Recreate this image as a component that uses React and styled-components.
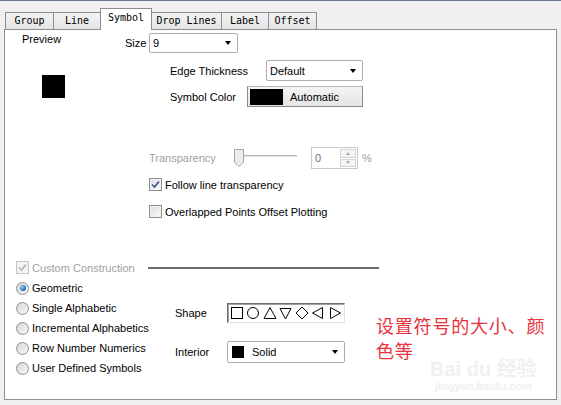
import React from "react";
import styled, { createGlobalStyle } from "styled-components";

const GlobalStyle = createGlobalStyle`
  html, body {
    margin: 0;
    padding: 0;
    background: #f0f0f0;
  }
  body {
    font-family: "Liberation Sans", Arial, sans-serif;
    font-size: 11px;
    color: #000;
  }
`;

const Window = styled.div`
  position: relative;
  width: 561px;
  height: 405px;
  box-sizing: border-box;
  border-top: 1px solid #6b7a8c;
  background: #f0f0f0;
  overflow: hidden;
`;

const TabBar = styled.div`
  position: relative;
  z-index: 1;
  display: flex;
  align-items: flex-end;
  height: 21px;
  margin-top: 7px;
  padding-left: 5px;
`;

const Tab = styled.div`
  position: relative;
  z-index: ${p => (p.$active ? 2 : 1)};
  box-sizing: border-box;
  width: ${p => p.$w}px;
  height: ${p => (p.$active ? 22 : 17)}px;
  margin-left: -1px;
  margin-bottom: ${p => (p.$active ? -1 : 0)}px;
  border: 1px solid #898c95;
  border-bottom: none;
  background: ${p => (p.$active ? "#fff" : "linear-gradient(#f3f3f3, #e4e4e4)")};
  font-family: "DejaVu Sans Mono", "Liberation Mono", monospace;
  font-size: 10px;
  line-height: ${p => (p.$active ? 18 : 16)}px;
  text-align: center;
  &:first-child {
    margin-left: 0;
  }
`;

const Panel = styled.div`
  position: relative;
  z-index: 0;
  box-sizing: border-box;
  height: 371px;
  margin: 0 4px;
  border: 1px solid #8e8f8f;
  background: #fff;
  display: flex;
  flex-direction: column;
`;

const TopSection = styled.div`
  display: flex;
`;

const PreviewCol = styled.div`
  width: 120px;
  flex-shrink: 0;
  display: flex;
  flex-direction: column;
`;

const PreviewLabel = styled.div`
  margin: 2px 0 0 17px;
  line-height: 14px;
`;

const PreviewSymbol = styled.div`
  width: 23px;
  height: 23px;
  margin: 29px 0 0 37px;
  background: #000;
`;

const Options = styled.div`
  display: flex;
  flex-direction: column;
`;

const Row = styled.div`
  display: flex;
  align-items: center;
  height: ${p => p.$h}px;
  margin-top: ${p => p.$mt || 0}px;
  padding-left: ${p => p.$pl || 0}px;
  gap: ${p => p.$gap || 0}px;
`;

const Label = styled.div`
  width: ${p => (p.$w ? `${p.$w}px` : "auto")};
  flex-shrink: 0;
  color: ${p => (p.$disabled ? "#a0a0a0" : "#000")};
  white-space: nowrap;
`;

const Combo = styled.div`
  box-sizing: border-box;
  width: ${p => p.$w}px;
  height: ${p => p.$h}px;
  display: flex;
  align-items: center;
  padding: 0 6px 0 ${p => p.$pl || 3}px;
  border: 1px solid #abadb3;
  border-radius: 2px;
  background: #fff;
`;

const ComboText = styled.span`
  flex: 1;
  margin-left: ${p => p.$ml || 0}px;
`;

const Arrow = styled.span`
  width: 0;
  height: 0;
  border-left: 3.5px solid transparent;
  border-right: 3.5px solid transparent;
  border-top: 4px solid #000;
`;

const ColorButton = styled.div`
  box-sizing: border-box;
  width: 116px;
  height: 21px;
  display: flex;
  align-items: center;
  padding-left: 2px;
  border: 1px solid #8a8a8a;
  border-top-color: #b8b8b8;
  background: linear-gradient(#f4f4f4, #e4e4e4);
`;

const ColorSwatch = styled.span`
  width: 33px;
  height: 16px;
  background: #000;
`;

const ButtonText = styled.span`
  margin-left: 7px;
`;

const SpinBox = styled.div`
  box-sizing: border-box;
  width: 47px;
  height: 22px;
  display: flex;
  align-items: stretch;
  border: 1px solid #c9c9c9;
  background: #fff;
`;

const SpinValue = styled.span`
  flex: 1;
  padding-left: 3px;
  display: flex;
  align-items: center;
  color: #707070;
`;

const SpinButtons = styled.div`
  width: 16px;
  display: flex;
  flex-direction: column;
  padding: 1px 1px 1px 0;
  gap: 1px;
`;

const SpinButton = styled.span`
  flex: 1;
  display: flex;
  align-items: center;
  justify-content: center;
  border: 1px solid #d4d4d4;
  background: #f4f4f4;
  &::after {
    content: "";
    width: 0;
    height: 0;
    border-left: 2.5px solid transparent;
    border-right: 2.5px solid transparent;
    ${p =>
      p.$up
        ? "border-bottom: 3px solid #a8a8a8;"
        : "border-top: 3px solid #a8a8a8;"}
  }
`;

const Percent = styled.span`
  margin-left: 4px;
  color: #a0a0a0;
`;

const Box = styled.span`
  box-sizing: border-box;
  width: 13px;
  height: 13px;
  flex-shrink: 0;
  display: flex;
  align-items: center;
  justify-content: center;
  border: 1px solid ${p => (p.$disabled ? "#c4c4c4" : "#8f8f8f")};
  background: ${p =>
    p.$disabled ? "#f4f4f4" : "linear-gradient(135deg, #dcdcdc, #fbfbfb)"};
  box-shadow: inset 0 0 0 1px ${p => (p.$disabled ? "#f4f4f4" : "#f2f2f2")};
`;

const Radio = styled.span`
  box-sizing: border-box;
  width: 13px;
  height: 13px;
  flex-shrink: 0;
  display: flex;
  align-items: center;
  justify-content: center;
  border: 1px solid #8e8f8f;
  border-radius: 50%;
  background: linear-gradient(135deg, #d6d6d6, #f8f8f8);
  &::after {
    content: "";
    display: ${p => (p.$on ? "block" : "none")};
    width: 6px;
    height: 6px;
    border-radius: 50%;
    background: radial-gradient(circle at 35% 35%, #8fd0ff, #1766b0 70%, #0d3f73);
  }
`;

const LowerSection = styled.div`
  display: flex;
  flex-direction: column;
  margin-top: 43px;
`;

const CustomLabel = styled.div`
  width: 132px;
  display: flex;
  align-items: center;
  gap: 3px;
  color: #a0a0a0;
`;

const Rule = styled.div`
  width: 231px;
  height: 2px;
  background: #6a6a6a;
`;

const BodyRow = styled.div`
  display: flex;
  margin-top: 4px;
`;

const RadioList = styled.div`
  width: 159px;
  flex-shrink: 0;
  padding-left: 11px;
  display: flex;
  flex-direction: column;
`;

const ShapeCol = styled.div`
  width: 170px;
  flex-shrink: 0;
  margin-top: 25px;
  display: flex;
  flex-direction: column;
`;

const ShapeBox = styled.div`
  box-sizing: border-box;
  width: 118px;
  height: 20px;
  display: flex;
  align-items: center;
  border: 1px solid;
  border-color: #6e6e6e #e0e0e0 #e0e0e0 #6e6e6e;
  box-shadow: inset 1px 1px 0 #a0a0a0;
  background: #fff;
`;

const InteriorSwatch = styled.span`
  width: 12px;
  height: 12px;
  background: #000;
`;

const Note = styled.div`
  margin: 35px 0 0 31px;
  display: flex;
  flex-direction: column;
  align-items: flex-start;
  font-family: "Noto Sans CJK SC", sans-serif;
  font-size: 18px;
  line-height: 25px;
  letter-spacing: 0.8px;
  color: #e8323c;
`;

const NoteLine = styled.span`
  white-space: nowrap;
`;

const Watermark = styled.div`
  position: absolute;
  left: 430px;
  top: 357px;
  display: flex;
  flex-direction: column;
  align-items: center;
  color: #f0f0f0;
  font-family: "Liberation Sans", "Noto Sans CJK SC", sans-serif;
  pointer-events: none;
`;

const WatermarkBrand = styled.span`
  font-size: 20px;
  font-weight: bold;
  line-height: 22px;
`;

const WatermarkUrl = styled.span`
  font-size: 11px;
  font-weight: bold;
  line-height: 13px;
`;

const tabs = [
  { name: "Group", w: 49 },
  { name: "Line", w: 48 },
  { name: "Symbol", w: 52, active: true },
  { name: "Drop Lines", w: 71 },
  { name: "Label", w: 48 },
  { name: "Offset", w: 49 },
];

const radios = [
  "Geometric",
  "Single Alphabetic",
  "Incremental Alphabetics",
  "Row Number Numerics",
  "User Defined Symbols",
];

const Check = ({ color }) => (
  <svg width="9" height="9" viewBox="0 0 9 9">
    <path d="M1 4.5 L3.5 7 L8 1.5" fill="none" stroke={color} strokeWidth="1.6" />
  </svg>
);

const Slider = () => (
  <svg width="77" height="22" viewBox="0 0 77 22">
    <line x1="10" y1="8.5" x2="63" y2="8.5" stroke="#b4b4b4" />
    <line x1="10" y1="9.5" x2="63" y2="9.5" stroke="#e6e6e6" />
    <polygon
      points="0.5,2.5 9.5,2.5 9.5,15 5,19.5 0.5,15"
      fill="#ececec"
      stroke="#a4a4a4"
    />
  </svg>
);

const Shapes = () => (
  <svg width="116" height="18" viewBox="0 0 116 18">
    <g fill="none" stroke="#000" strokeWidth="1">
      <rect x="3.5" y="3.5" width="11" height="11" />
      <circle cx="25" cy="9" r="5.5" />
      <polygon points="36,14.5 42,3.5 48,14.5" />
      <polygon points="52,4.5 63,4.5 57.5,15" />
      <polygon points="68,9 74,3 80,9 74,15" />
      <polygon points="94.5,3.5 94.5,14.5 84.5,9" />
      <polygon points="102.5,3.5 102.5,14.5 112.5,9" />
    </g>
  </svg>
);

export default function App() {
  return (
    <>
      <GlobalStyle />
      <Window>
        <TabBar>
          {tabs.map(t => (
            <Tab key={t.name} $w={t.w} $active={t.active}>
              {t.name}
            </Tab>
          ))}
        </TabBar>
        <Panel>
          <TopSection>
            <PreviewCol>
              <PreviewLabel>Preview</PreviewLabel>
              <PreviewSymbol />
            </PreviewCol>
            <Options>
              <Row $h={20} $mt={3}>
                <Label $w={24}>Size</Label>
                <Combo $w={89} $h={20}>
                  <ComboText>9</ComboText>
                  <Arrow />
                </Combo>
              </Row>
              <Row $h={21} $mt={7} $pl={45}>
                <Label $w={96}>Edge Thickness</Label>
                <Combo $w={97} $h={21}>
                  <ComboText>Default</ComboText>
                  <Arrow />
                </Combo>
              </Row>
              <Row $h={21} $mt={5} $pl={45}>
                <Label $w={77}>Symbol Color</Label>
                <ColorButton>
                  <ColorSwatch />
                  <ButtonText>Automatic</ButtonText>
                </ColorButton>
              </Row>
              <Row $h={22} $mt={40} $pl={24}>
                <Label $w={85} $disabled>
                  Transparency
                </Label>
                <Slider />
                <SpinBox>
                  <SpinValue>0</SpinValue>
                  <SpinButtons>
                    <SpinButton $up />
                    <SpinButton />
                  </SpinButtons>
                </SpinBox>
                <Percent>%</Percent>
              </Row>
              <Row $h={13} $mt={9} $pl={24} $gap={3}>
                <Box>
                  <Check color="#3a4f8c" />
                </Box>
                <Label>Follow line transparency</Label>
              </Row>
              <Row $h={13} $mt={14} $pl={24} $gap={3}>
                <Box />
                <Label>Overlapped Points Offset Plotting</Label>
              </Row>
            </Options>
          </TopSection>

          <LowerSection>
            <Row $h={13} $pl={11}>
              <CustomLabel>
                <Box $disabled>
                  <Check color="#b4b4b4" />
                </Box>
                Custom Construction
              </CustomLabel>
              <Rule />
            </Row>
            <BodyRow>
              <RadioList>
                {radios.map((r, i) => (
                  <Row key={r} $h={20} $gap={3}>
                    <Radio $on={i === 0} />
                    <Label>{r}</Label>
                  </Row>
                ))}
              </RadioList>
              <ShapeCol>
                <Row $h={20}>
                  <Label $w={52}>Shape</Label>
                  <ShapeBox>
                    <Shapes />
                  </ShapeBox>
                </Row>
                <Row $h={22} $mt={18}>
                  <Label $w={52}>Interior</Label>
                  <Combo $w={119} $h={22} $pl={4}>
                    <InteriorSwatch />
                    <ComboText $ml={8}>Solid</ComboText>
                    <Arrow />
                  </Combo>
                </Row>
              </ShapeCol>
              <Note>
                <NoteLine>设置符号的大小、颜</NoteLine>
                <NoteLine>色等</NoteLine>
              </Note>
            </BodyRow>
          </LowerSection>
        </Panel>
        <Watermark>
          <WatermarkBrand>Bai du 经验</WatermarkBrand>
          <WatermarkUrl>jingyan.baidu.com</WatermarkUrl>
        </Watermark>
      </Window>
    </>
  );
}
